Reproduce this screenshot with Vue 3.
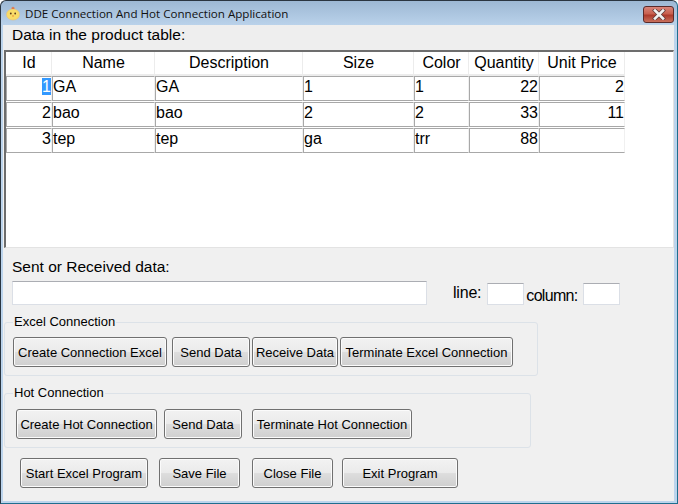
<script setup>
const columns = [
  { title: 'Id', width: 46 },
  { title: 'Name', width: 103 },
  { title: 'Description', width: 148 },
  { title: 'Size', width: 111 },
  { title: 'Color', width: 55 },
  { title: 'Quantity', width: 70 },
  { title: 'Unit Price', width: 86 }
]
const rows = [
  ['1', 'GA', 'GA', '1', '1', '22', '2'],
  ['2', 'bao', 'bao', '2', '2', '33', '11'],
  ['3', 'tep', 'tep', 'ga', 'trr', '88', '']
]
const rightAligned = [0, 5, 6]
const gridColumns = columns.map(c => c.width + 'px').join(' ')
const excelButtons = [
  { label: 'Create Connection Excel', width: 154 },
  { label: 'Send Data', width: 78 },
  { label: 'Receive Data', width: 86 },
  { label: 'Terminate Excel Connection', width: 173 }
]
</script>

<template>
  <div class="window">
    <div class="titlebar">
      <svg class="app-icon" width="16" height="16" viewBox="0 0 16 16">
        <path d="M6.5 4 L7 1.5 L8 3 L9 1.5 L9.5 4 Z" fill="#e8642c" />
        <ellipse cx="8" cy="9.5" rx="6.5" ry="5.5" fill="#f8dc68" stroke="#e8c078" stroke-width="0.6" />
        <circle cx="5.8" cy="8.5" r="0.9" fill="#5a3a1c" />
        <circle cx="10.2" cy="8.5" r="0.9" fill="#5a3a1c" />
        <path d="M6.8 10.5 H9.2 L8 12.1 Z" fill="#e8842c" />
      </svg>
      <span class="title">DDE Connection And Hot Connection Application</span>
      <div class="close">
        <svg width="14" height="11" viewBox="0 0 14 11">
          <path d="M3 1.5 L11 9.5 M11 1.5 L3 9.5" stroke="#5c3a3a" stroke-width="4" stroke-linecap="square" />
          <path d="M3 1.5 L11 9.5 M11 1.5 L3 9.5" stroke="#f2f2f2" stroke-width="2.6" stroke-linecap="square" />
        </svg>
      </div>
    </div>

    <div class="client">
      <div class="caption">Data in the product table:</div>

      <div class="table-panel">
        <div class="grid head" :style="{ gridTemplateColumns: gridColumns }">
          <div v-for="col in columns" :key="col.title" class="head-cell">{{ col.title }}</div>
        </div>
        <div
          v-for="(row, r) in rows"
          :key="r"
          class="grid row"
          :style="{ gridTemplateColumns: gridColumns }"
        >
          <div
            v-for="(val, c) in row"
            :key="c"
            class="cell"
            :class="{ right: rightAligned.includes(c) }"
          ><span :class="{ selected: r === 0 && c === 0 }">{{ val }}</span></div>
        </div>
      </div>

      <div class="sent-label">Sent or Received data:</div>
      <div class="input-row">
        <div class="box main-input"></div>
        <span class="line-label">line:</span>
        <div class="box small-input"></div>
        <span class="column-label">column:</span>
        <div class="box small-input col-input"></div>
      </div>

      <fieldset class="group excel">
        <legend>Excel Connection</legend>
        <div class="btn-row">
          <button
            v-for="b in excelButtons"
            :key="b.label"
            class="btn"
            :style="{ width: b.width + 'px' }"
          >{{ b.label }}</button>
        </div>
      </fieldset>

      <fieldset class="group hot">
        <legend>Hot Connection</legend>
        <div class="btn-row">
          <button class="btn w141">Create Hot Connection</button>
          <button class="btn w78 ml7">Send Data</button>
          <button class="btn w160 ml10">Terminate Hot Connection</button>
        </div>
      </fieldset>

      <div class="btn-row bottom">
        <button class="btn w128">Start Excel Program</button>
        <button class="btn w81 ml11">Save File</button>
        <button class="btn w81 ml12">Close File</button>
        <button class="btn w116 ml9">Exit Program</button>
      </div>
    </div>
  </div>
</template>

<style scoped>
.window {
  width: 678px;
  height: 504px;
  box-sizing: border-box;
  border: 1px solid #2a3540;
  border-bottom-color: #1f6e8e;
  border-right-color: #1f6e8e;
  border-radius: 6px 6px 0 0;
  background: linear-gradient(#9db8d4, #bcd4ec 26px);
  padding: 0 3px 2px 2px;
  display: flex;
  flex-direction: column;
  font-family: "Liberation Sans", Arial, sans-serif;
  color: #000;
  overflow: hidden;
}
.titlebar {
  height: 24px;
  flex: none;
  display: flex;
  align-items: center;
}
.app-icon {
  margin-left: 2px;
}
.title {
  margin-left: 4px;
  font-family: "Open Sans", sans-serif;
  font-size: 11.6px;
  color: #111;
}
.close {
  margin-left: auto;
  margin-top: 3px;
  width: 31px;
  height: 17px;
  box-sizing: border-box;
  border: 1px solid #5a2a2a;
  border-radius: 3px;
  background: linear-gradient(#d8857a 0%, #c8604f 45%, #ad3a2c 55%, #c8705c 100%);
  display: flex;
  align-items: center;
  justify-content: center;
}
.client {
  flex: 1;
  background: #f0f0f0;
  min-height: 0;
}
.caption {
  height: 25px;
  line-height: 20px;
  padding-left: 9px;
  font-size: 15.5px;
  background: #eeeeee;
}
.table-panel {
  height: 198px;
  box-sizing: border-box;
  background: #fff;
  border-top: 2px solid #6d6d6d;
  border-left: 2px solid #6d6d6d;
  border-bottom: 1px solid #e3e3e3;
  border-right: 1px solid #e3e3e3;
  margin-left: 1px;
}
.grid {
  display: grid;
}
.head {
  height: 24px;
}
.head-cell {
  text-align: center;
  font-size: 16px;
  line-height: 22px;
  padding-left: 1px;
  border-right: 1px solid #ececec;
  border-bottom: 2px solid #ececec;
}
.row {
  height: 24px;
  margin-bottom: 2px;
}
.cell {
  box-sizing: border-box;
  height: 25px;
  border: 1px solid #a8a8a8;
  border-right-color: #f0f0f0;
  font-size: 16px;
  line-height: 20px;
  padding: 0;
  white-space: nowrap;
}
.cell.right {
  text-align: right;
}
.selected {
  background: #3399ff;
  color: #fff;
}
.sent-label {
  padding-left: 9px;
  margin-top: 10px;
  font-size: 15.5px;
  line-height: 18px;
}
.input-row {
  display: flex;
  align-items: flex-end;
  margin-top: 5px;
  padding-left: 9px;
  height: 24px;
}
.box {
  box-sizing: border-box;
  background: #fff;
  border: 1px solid #dbdfe6;
  border-top-color: #abadb3;
}
.main-input {
  width: 415px;
  height: 24px;
}
.small-input {
  width: 37px;
  height: 22px;
}
.col-input {
  margin-left: 6px;
}
.line-label {
  margin-left: 26px;
  margin-right: 6px;
  align-self: flex-start;
  font-size: 16px;
  letter-spacing: -0.2px;
  line-height: 24px;
}
.column-label {
  margin-left: 2px;
  font-size: 16px;
  letter-spacing: -0.7px;
  line-height: 18px;
}
.group {
  margin: 0;
  padding: 0;
  min-width: 0;
  box-sizing: border-box;
  border: 1px solid #dce2e8;
  border-radius: 3px;
}
.group legend {
  margin-left: 8px;
  padding: 0 1px;
  font-size: 13px;
  line-height: 14px;
}
.excel {
  width: 534px;
  height: 61px;
  margin-top: 10px;
  margin-left: 1px;
}
.excel .btn-row {
  gap: 2px;
  margin-top: 8px;
  padding-left: 8px;
}
.excel .btn:first-child {
  margin-right: 3px;
}
.hot {
  width: 527px;
  height: 62px;
  margin-top: 10px;
  margin-left: 1px;
}
.hot .btn-row {
  margin-top: 9px;
  padding-left: 11px;
}
.btn-row {
  display: flex;
}
.bottom {
  margin-top: 10px;
  padding-left: 17px;
}
.btn {
  height: 30px;
  box-sizing: border-box;
  padding: 0;
  border: 1px solid #707070;
  border-radius: 3px;
  background: linear-gradient(#f2f2f2 0%, #ebebeb 48%, #dddddd 52%, #cfcfcf 100%);
  box-shadow: inset 0 0 0 1px #fbfbfb;
  font-family: "Liberation Sans", Arial, sans-serif;
  font-size: 13px;
  color: #000;
  white-space: nowrap;
}
.w141 { width: 141px; }
.w78 { width: 78px; }
.w160 { width: 160px; }
.w128 { width: 128px; }
.w81 { width: 81px; }
.w116 { width: 116px; }
.ml7 { margin-left: 7px; }
.ml9 { margin-left: 9px; }
.ml10 { margin-left: 10px; }
.ml11 { margin-left: 11px; }
.ml12 { margin-left: 12px; }
</style>

<style>
html, body {
  margin: 0;
  padding: 0;
  background: #fff;
}
</style>
